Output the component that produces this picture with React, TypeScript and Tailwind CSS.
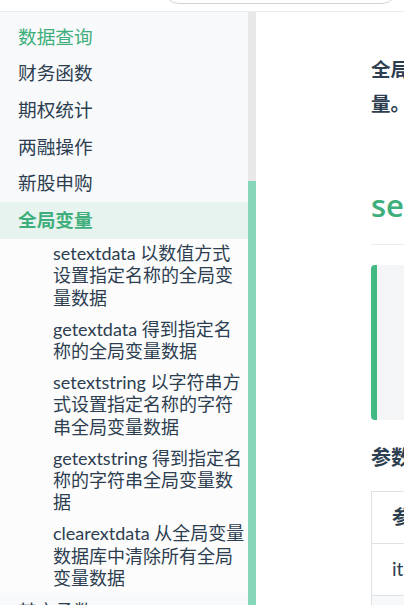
const topItems = ["数据查询", "财务函数", "期权统计", "两融操作", "新股申购"];

const subItems: string[][] = [
  ["setextdata 以数值方式", "设置指定名称的全局变", "量数据"],
  ["getextdata 得到指定名", "称的全局变量数据"],
  ["setextstring 以字符串方", "式设置指定名称的字符", "串全局变量数据"],
  ["getextstring 得到指定名", "称的字符串全局变量数", "据"],
  ["clearextdata 从全局变量", "数据库中清除所有全局", "变量数据"],
];

const font = "font-['Lato','Noto_Sans_CJK_SC',sans-serif]";

export default function App() {
  return (
    <div className={`h-[605px] w-[404px] overflow-hidden flex flex-col bg-white text-[#2c3e50] ${font}`}>
      {/* navbar, scrolled mostly out of view */}
      <header className="h-[12px] shrink-0 border-b border-[#eaecef] flex items-end justify-end pr-[6px] overflow-hidden">
        <div className="h-[32px] w-[235px] mb-[7px] shrink-0 rounded-full border border-[#cfd4db]" />
      </header>

      <div className="flex-1 flex min-h-0">
        {/* sidebar */}
        <nav className="w-[248px] shrink-0 bg-[#f8f9fb] pt-[6.7px] overflow-hidden">
          {topItems.map((t, i) => (
            <div
              key={t}
              className={`h-[36.7px] pl-[18px] text-[18.7px] leading-[36.7px] ${i === 0 ? "text-[#3eaf7c]" : ""}`}
            >
              {t}
            </div>
          ))}
          <div className="h-[36.7px] pl-[18px] text-[18.7px] leading-[36.7px] font-bold text-[#3eaf7c] bg-[#e7f3ee]">
            全局变量
          </div>
          <ul className="bg-[#fcfcfd] pt-[3px] pb-[3.5px] pl-[53px] flex flex-col gap-[8.5px]">
            {subItems.map((lines) => (
              <li key={lines[0]} className="text-[18px] leading-[22.4px] whitespace-nowrap">
                {lines.map((l) => (
                  <span key={l} className="block">
                    {l}
                  </span>
                ))}
              </li>
            ))}
          </ul>
          <div className="h-[36.7px] pl-[18px] text-[18.7px] leading-[36.7px]">其它函数</div>
        </nav>

        {/* scrollbar */}
        <div className="w-[8px] shrink-0 flex flex-col">
          <div className="h-[169px] bg-[#e8e8e8]" />
          <div className="flex-1 bg-[#86d6b9]" />
        </div>

        {/* page content */}
        <main className="flex-1 overflow-hidden">
          <div className="w-[760px] pl-[115px] pt-[40.5px]">
            <p className="text-[19.5px] leading-[34.5px] font-bold whitespace-nowrap">
              全局变量函数用于在不同公式之间存取数据，可以保存计算的中间结果作为全局变
              <br />
              量。
            </p>
            <h2 className="mt-[63.5px] pb-[19px] border-b border-[#eaecef] font-['Open_Sans',sans-serif] text-[31px] leading-[40px] font-semibold text-[#3eaf7c]">
              setextdata
            </h2>
            <div className="mt-[20px] h-[155px] rounded-[4px] border-l-[6px] border-[#42b983] bg-[#f3f5f7]" />
            <h3 className="mt-[22px] text-[20px] leading-[30px] font-bold">参数</h3>
            <table className="mt-[19px] border-collapse text-[19.2px]">
              <thead>
                <tr>
                  <th className="h-[52px] border border-[#dfe2e5] px-[20px] text-left font-bold w-[160px]">参数</th>
                  <th className="h-[52px] border border-[#dfe2e5] px-[20px] text-left font-bold w-[320px]">说明</th>
                </tr>
              </thead>
              <tbody>
                <tr>
                  <td className="h-[52px] border border-[#dfe2e5] px-[20px]">item</td>
                  <td className="h-[52px] border border-[#dfe2e5] px-[20px]">全局变量名称</td>
                </tr>
                <tr className="bg-[#f6f8fa]">
                  <td className="h-[52px] border border-[#dfe2e5] px-[20px]">value</td>
                  <td className="h-[52px] border border-[#dfe2e5] px-[20px]">数值</td>
                </tr>
              </tbody>
            </table>
          </div>
        </main>
      </div>
    </div>
  );
}
